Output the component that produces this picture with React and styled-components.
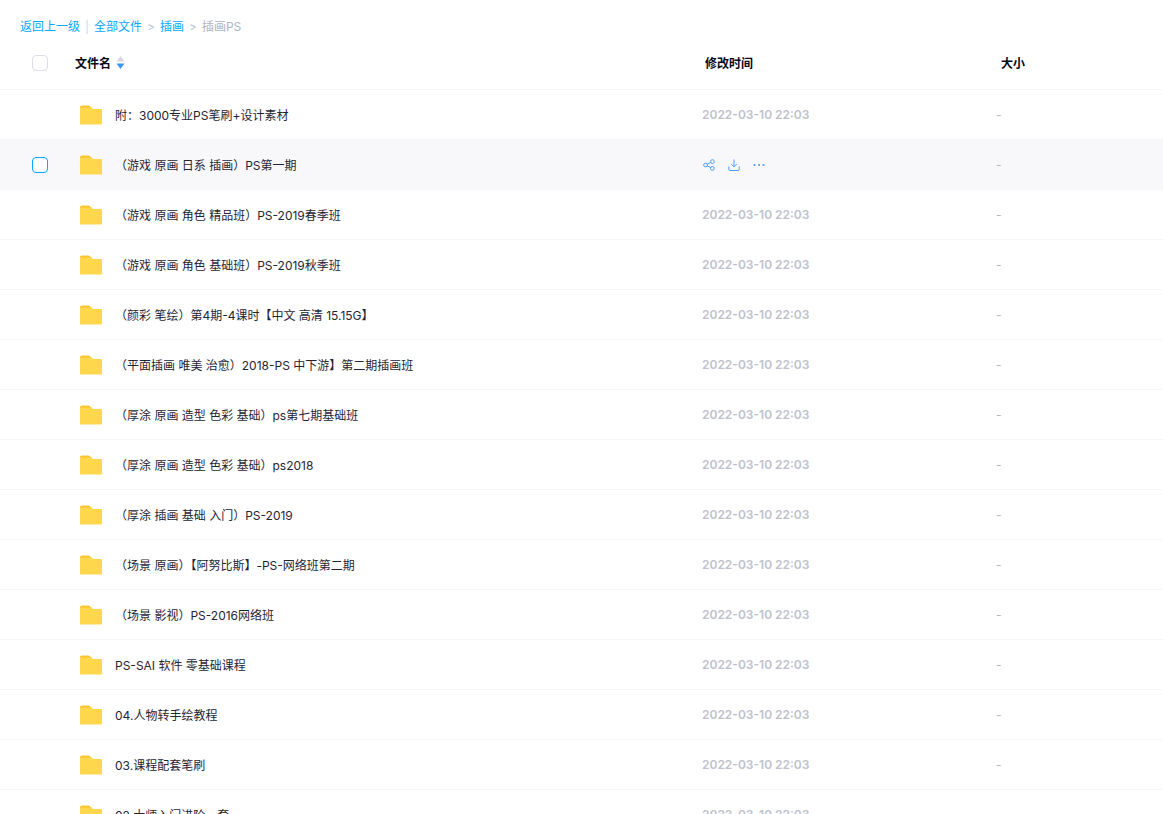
import styled, { createGlobalStyle } from "styled-components";

const GlobalStyle = createGlobalStyle`
  html, body {
    margin: 0;
    padding: 0;
    height: 100%;
    overflow: hidden;
    background: #fff;
    font-family: Inter, "Noto Sans CJK SC", sans-serif;
  }
`

const files = [
  "附：3000专业PS笔刷+设计素材",
  "（游戏 原画 日系 插画）PS第一期",
  "（游戏 原画 角色 精品班）PS-2019春季班",
  "（游戏 原画 角色 基础班）PS-2019秋季班",
  "（颜彩 笔绘）第4期-4课时【中文 高清 15.15G】",
  "（平面插画 唯美 治愈）2018-PS 中下游】第二期插画班",
  "（厚涂 原画 造型 色彩 基础）ps第七期基础班",
  "（厚涂 原画 造型 色彩 基础）ps2018",
  "（厚涂 插画 基础 入门）PS-2019",
  "（场景 原画）【阿努比斯】-PS-网络班第二期",
  "（场景 影视）PS-2016网络班",
  "PS-SAI 软件 零基础课程",
  "04.人物转手绘教程",
  "03.课程配套笔刷",
  "02.大师入门进阶一套",
]

function FolderIcon() {
  return (
    <svg width="24" height="22" viewBox="0 0 24 22">
      <path d="M1 3.5C1 2.4 1.9 1.5 3 1.5h6.2c.7 0 1.3.3 1.8.8L13 4.5H1z" fill="#fdc22f" />
      <path d="M1 5.5C1 4.4 1.9 3.5 3 3.5h9.5L14 5h8c.6 0 1 .4 1 1v13.5c0 .6-.4 1-1 1H2c-.6 0-1-.4-1-1z" fill="#ffd74d" />
    </svg>
  )
}

function ShareIcon() {
  return (
    <svg width="12" height="12" viewBox="0 0 12 12" fill="none" stroke="#4c9dff" strokeWidth="1">
      <circle cx="2.6" cy="6" r="1.9" />
      <circle cx="9.4" cy="2.6" r="1.9" />
      <circle cx="9.4" cy="9.4" r="1.9" />
      <path d="M4.3 5.1l3.4-1.7M4.3 6.9l3.4 1.7" />
    </svg>
  )
}

function DownloadIcon() {
  return (
    <svg width="12" height="12" viewBox="0 0 12 12" fill="none" stroke="#4c9dff" strokeWidth="1">
      <path d="M6 .5v7M3.2 5l2.8 2.8L8.8 5" />
      <path d="M.8 7.5v2.8c0 .7.5 1.2 1.2 1.2h8c.7 0 1.2-.5 1.2-1.2V7.5" />
    </svg>
  )
}

function MoreIcon() {
  return (
    <svg width="12" height="12" viewBox="0 0 12 12" fill="#4c9dff">
      <circle cx="1.5" cy="6" r="1.1" />
      <circle cx="6" cy="6" r="1.1" />
      <circle cx="10.5" cy="6" r="1.1" />
    </svg>
  )
}

function SortIcon() {
  return (
    <svg width="9" height="13" viewBox="0 0 9 13">
      <path d="M4.5 0L8.5 5.5 0.5 5.5z" fill="#d5d6e2" strokeLinejoin="round" />
      <path d="M.5 7.5h8L4.5 13z" fill="#3f95fb" />
    </svg>
  )
}

function App() {
  return (
    <Page>
      <GlobalStyle />
      <Breadcrumb>
        <CrumbLink>返回上一级</CrumbLink>
        <Bar>|</Bar>
        <CrumbLink>全部文件</CrumbLink>
        <Arrow>&gt;</Arrow>
        <CrumbLink>插画</CrumbLink>
        <Arrow>&gt;</Arrow>
        <Current>插画PS</Current>
      </Breadcrumb>
      <HeaderRow>
        <CheckCell><Check /></CheckCell>
        <HeadName>
          文件名
          <SortIcon />
        </HeadName>
        <HeadCell>修改时间</HeadCell>
        <HeadSize>大小</HeadSize>
      </HeaderRow>
      {files.map((name, i) => (
        <Row key={name} $active={i === 1}>
          <CheckCell>{i === 1 && <Check $active />}</CheckCell>
          <NameCell>
            <FolderIcon />
            <FileName>{name}</FileName>
          </NameCell>
          {i === 1 ? (
            <Actions>
              <ShareIcon />
              <DownloadIcon />
              <MoreIcon />
            </Actions>
          ) : (
            <DateCell>2022-03-10 22:03</DateCell>
          )}
          <SizeCell>-</SizeCell>
        </Row>
      ))}
    </Page>
  )
}

const Page = styled.div`
  height: 814px;
  overflow: hidden;
  background: #fff;
`

const Breadcrumb = styled.div`
  display: flex;
  align-items: center;
  height: 18px;
  padding: 18px 0 0 20px;
  font-size: 12px;
  line-height: 18px;
`

const CrumbLink = styled.span`
  color: #06a7ff;
`

const Bar = styled.span`
  color: #c4d8f0;
  margin: 0 5px;
`

const Arrow = styled.span`
  color: #bcc6d6;
  margin: 0 5px;
`

const Current = styled.span`
  color: #afb3bf;
`

const columns = `
  display: grid;
  grid-template-columns: 75px 627px 294px 1fr;
  align-items: center;
`

const HeaderRow = styled.div`
  ${columns}
  height: 53px;
  border-bottom: 1px solid #f7f7f9;
`

const CheckCell = styled.div`
  display: flex;
  padding-left: 32px;
`

const Check = styled.div`
  width: 14px;
  height: 14px;
  border-radius: 4px;
  border: 1px solid ${p => (p.$active ? "#06a7ff" : "#dcdde6")};
  background: #fff;
`

const HeadName = styled.div`
  display: flex;
  align-items: center;
  gap: 5px;
  font-size: 12px;
  font-weight: 700;
  color: #03081a;
`

const HeadCell = styled.div`
  padding-left: 3px;
  font-size: 12px;
  font-weight: 700;
  color: #03081a;
`

const HeadSize = styled(HeadCell)`
  padding-left: 5px;
`

const Row = styled.div`
  ${columns}
  height: 49px;
  border-bottom: 1px solid #f7f7f9;
  background: ${p => (p.$active ? "#f8f8fb" : "#fff")};
`

const NameCell = styled.div`
  display: flex;
  align-items: center;
  gap: 12px;
  padding-left: 4px;
`

const FileName = styled.span`
  font-size: 12px;
  color: #1f2535;
  white-space: nowrap;
`

const DateCell = styled.div`
  font-size: 12px;
  font-weight: 600;
  color: #c0c1cc;
`

const Actions = styled.div`
  display: flex;
  align-items: center;
  gap: 13px;
  padding-left: 1px;
`

const SizeCell = styled.div`
  font-size: 12px;
  color: #b4b6c2;
`

export default App
